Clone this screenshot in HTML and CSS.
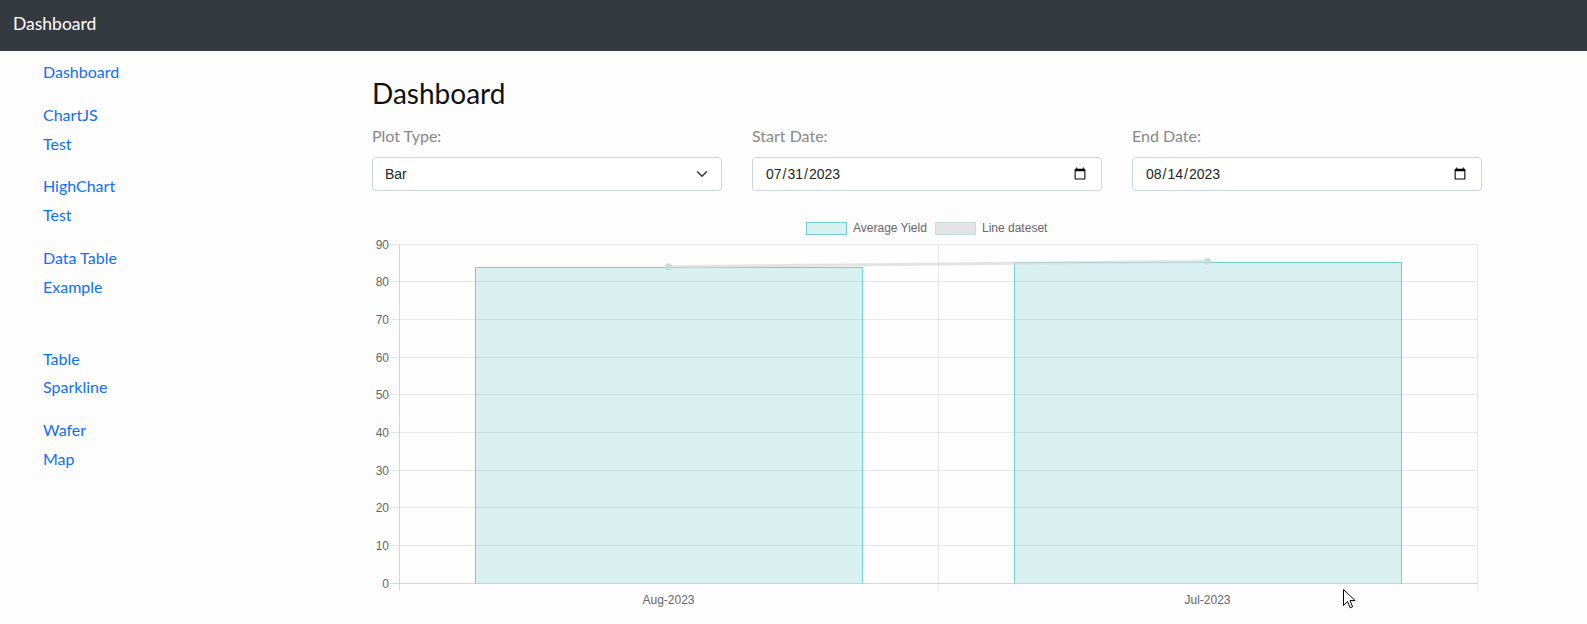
FILE: index.html
```html
<!DOCTYPE html>
<html lang="en">
<head>
<meta charset="utf-8">
<title>Dashboard</title>
<link rel="stylesheet" href="styles.css">
</head>
<body>
<header class="navbar"><span class="brand">Dashboard</span></header>
<div class="layout">
  <nav class="sidebar">
    <ul class="nav-list">
      <li class="nav-item"><a href="#">Dashboard</a></li>
      <li class="nav-item"><a href="#">ChartJS<br>Test</a></li>
      <li class="nav-item"><a href="#">HighChart<br>Test</a></li>
      <li class="nav-item"><a href="#">Data Table<br>Example</a></li>
      <li class="nav-item spaced"><a href="#">Table<br>Sparkline</a></li>
      <li class="nav-item"><a href="#">Wafer<br>Map</a></li>
    </ul>
  </nav>
  <main class="main">
    <h1 class="title">Dashboard</h1>
    <div class="filters">
      <div class="field">
        <label for="plot">Plot Type:</label>
        <div class="select-wrap">
          <select id="plot" class="control select"><option>Bar</option><option>Line</option></select>
          <svg class="chevron" viewBox="0 0 16 16"><path d="m2 5 6 6 6-6" fill="none" stroke="#343a40" stroke-width="2" stroke-linecap="round" stroke-linejoin="round"/></svg>
        </div>
      </div>
      <div class="field">
        <label for="start">Start Date:</label>
        <input id="start" class="control date" type="date" value="2023-07-31">
      </div>
      <div class="field">
        <label for="end">End Date:</label>
        <input id="end" class="control date" type="date" value="2023-08-14">
      </div>
    </div>
    <svg class="chart" width="1110" height="420" viewBox="0 0 1110 420">
      <g class="legend">
        <rect x="434.5" y="22.5" width="40" height="12" fill="rgba(75,192,192,0.2)" stroke="rgba(75,192,192,0.75)"/>
        <text x="481" y="31.5">Average Yield</text>
        <rect x="563.5" y="22.5" width="40" height="12" fill="#e4e4e4" stroke="#c9dada"/>
        <text x="610" y="31.5">Line dateset</text>
      </g>
      <g class="grid" stroke="#e6e6e6" stroke-width="1">
        <line x1="18" y1="44.5" x2="1105.5" y2="44.5"/>
        <line x1="18" y1="81.5" x2="1105.5" y2="81.5"/>
        <line x1="18" y1="119.5" x2="1105.5" y2="119.5"/>
        <line x1="18" y1="157.5" x2="1105.5" y2="157.5"/>
        <line x1="18" y1="194.5" x2="1105.5" y2="194.5"/>
        <line x1="18" y1="232.5" x2="1105.5" y2="232.5"/>
        <line x1="18" y1="270.5" x2="1105.5" y2="270.5"/>
        <line x1="18" y1="307.5" x2="1105.5" y2="307.5"/>
        <line x1="18" y1="345.5" x2="1105.5" y2="345.5"/>
        <line x1="566.5" y1="44.5" x2="566.5" y2="390"/>
        <line x1="1105.5" y1="44.5" x2="1105.5" y2="390"/>
      </g>
      <g class="axes" stroke="#cbd9d9" stroke-width="1">
        <line x1="18" y1="383.5" x2="1105.5" y2="383.5"/>
        <line x1="27.5" y1="44.5" x2="27.5" y2="390"/>
      </g>
      <g class="ticks">
        <text x="17" y="48.5">90</text>
        <text x="17" y="85.5">80</text>
        <text x="17" y="123.5">70</text>
        <text x="17" y="161.5">60</text>
        <text x="17" y="198.5">50</text>
        <text x="17" y="236.5">40</text>
        <text x="17" y="274.5">30</text>
        <text x="17" y="311.5">20</text>
        <text x="17" y="349.5">10</text>
        <text x="17" y="387.5">0</text>
      </g>
      <g class="labels">
        <text x="296.5" y="404">Aug-2023</text>
        <text x="835.5" y="404">Jul-2023</text>
      </g>
      <g class="bars">
        <rect x="103.5" y="67.5" width="387" height="316" fill="rgba(75,192,192,0.2)"/>
        <path d="M103.5 383.5V67.5H490.5V383.5" fill="none" stroke="rgba(75,192,192,0.75)"/>
        <rect x="642.5" y="62.5" width="387" height="321" fill="rgba(75,192,192,0.2)"/>
        <path d="M642.5 383.5V62.5H1029.5V383.5" fill="none" stroke="rgba(75,192,192,0.75)"/>
      </g>
      <g class="line">
        <line x1="296.5" y1="66.7" x2="835.5" y2="61.3" stroke="rgba(215,215,215,0.7)" stroke-width="3"/>
        <circle cx="296.5" cy="66.7" r="3" fill="#c4dcdc" stroke="#c4dcdc"/>
        <circle cx="835.5" cy="61.3" r="3" fill="#c4dcdc" stroke="#c4dcdc"/>
      </g>
    </svg>
  </main>
</div>
<svg class="cursor" width="13" height="20" viewBox="0 0 13 20"><path d="M0.5 0.5V16.5L4.5 12.5L7.2 18.8L9.6 17.8L7 11.6H12.2Z" fill="#fff" stroke="#000" stroke-width="1" stroke-linejoin="round"/></svg>
</body>
</html>
```
FILE: styles.css
```css
body {
  margin: 0;
  font-family: Lato, "Noto Sans", sans-serif;
  background: #fdfdfd;
  height: 624px;
  overflow: hidden;
  position: relative;
}

.navbar {
  height: 51px;
  box-sizing: border-box;
  padding: 13px 0 0 13px;
  background: #343a40;
}

.brand {
  color: #fff;
  font-size: 17.5px;
  line-height: 21px;
}

.layout {
  display: flex;
}

.sidebar {
  width: 357px;
  flex: none;
  box-sizing: border-box;
  padding-left: 43px;
}

.nav-list {
  list-style: none;
  margin: 0;
  padding: 0;
}

.nav-item a {
  display: block;
  padding: 7px 0;
  font-size: 16px;
  line-height: 28.8px;
  color: #0d6efd;
  text-decoration: none;
}

.nav-item.spaced {
  margin-top: 29px;
}

.main {
  width: 1140px;
  flex: none;
  box-sizing: border-box;
  padding: 26px 15px 0;
}

.title {
  margin: 0 0 13px;
  font-size: 28px;
  font-weight: 400;
  line-height: 1.2;
  color: #111;
}

.filters {
  display: grid;
  grid-template-columns: repeat(3, 350px);
  column-gap: 30px;
}

.field label {
  display: block;
  margin-bottom: 9px;
  font-size: 16px;
  line-height: 24px;
  color: #888;
}

.control {
  display: block;
  width: 100%;
  height: 34px;
  margin: 0;
  box-sizing: border-box;
  padding: 0 12px;
  border: 1px solid #c9d6dc;
  border-radius: 4px;
  background: #fff;
  font-family: "Liberation Sans", Arial, sans-serif;
  font-size: 14px;
  color: #212529;
  outline: none;
}

.select {
  appearance: none;
  -webkit-appearance: none;
}

.select-wrap {
  position: relative;
}

.chevron {
  position: absolute;
  right: 14px;
  top: 11px;
  width: 12px;
  height: 12px;
  pointer-events: none;
}

.chart {
  display: block;
  margin-top: 9px;
}

.chart text {
  font-family: "Liberation Sans", Arial, sans-serif;
  font-size: 12px;
  fill: #666;
}

.chart .ticks text {
  text-anchor: end;
}

.chart .labels text {
  text-anchor: middle;
}

.cursor {
  position: absolute;
  left: 1343px;
  top: 589px;
}
```
